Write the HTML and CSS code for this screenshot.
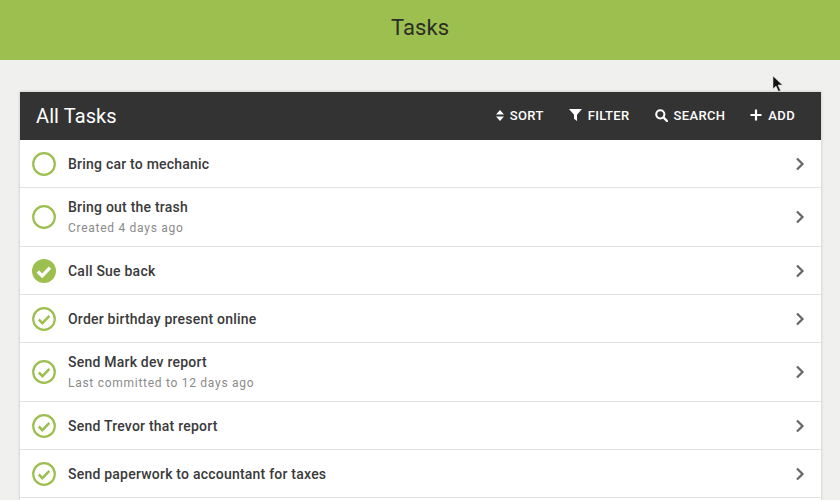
FILE: index.html
```html
<!DOCTYPE html>
<html lang="en">
<head>
  <meta charset="UTF-8" />
  <title>Tasks</title>
  <link rel="stylesheet" href="styles.css">
</head>
<body>
  <header class="app-bar"><h1>Tasks</h1></header>

  <svg class="cursor" width="12" height="18" viewBox="0 0 12 18"><path d="M1 1v13l3-3 2.500 5.500 2-1L6 10h4.500z" fill="#111" stroke="#ddd" stroke-width=".6"/></svg>

  <main class="panel">
    <div class="panel-head">
      <h2>All Tasks</h2>
      <div class="tools">
        <a class="tool">
          <svg width="8" height="11" viewBox="0 0 8 11"><path d="M4 0 8 4.500H0zM4 11 0 6.500h8z" fill="#fff"/></svg>
          SORT
        </a>
        <a class="tool">
          <svg width="13" height="12" viewBox="0 0 13 12"><path d="M0 0h13L8 5.800V12L5 9.800V5.800z" fill="#fff"/></svg>
          FILTER
        </a>
        <a class="tool">
          <svg width="13" height="13" viewBox="0 0 13 13"><circle cx="5.300" cy="5.300" r="4.100" fill="none" stroke="#fff" stroke-width="2"/><path d="M8.500 8.500l3.500 3.500" stroke="#fff" stroke-width="2.400" stroke-linecap="round"/></svg>
          SEARCH
        </a>
        <a class="tool">
          <svg width="12" height="12" viewBox="0 0 12 12"><path d="M6 .5v11M.5 6h11" stroke="#fff" stroke-width="2.200"/></svg>
          ADD
        </a>
      </div>
    </div>

    <ul class="task-list">
      <li class="task">
        <svg class="status" viewBox="0 0 24 24"><circle cx="12" cy="12" r="10.800" class="ring"/></svg>
        <div class="task-body"><div class="task-name">Bring car to mechanic</div></div>
        <svg class="chevron" viewBox="0 0 10 14"><path d="M2 1.500 7.500 7 2 12.500"/></svg>
      </li>
      <li class="task">
        <svg class="status" viewBox="0 0 24 24"><circle cx="12" cy="12" r="10.800" class="ring"/></svg>
        <div class="task-body">
          <div class="task-name">Bring out the trash</div>
          <div class="task-note">Created 4 days ago</div>
        </div>
        <svg class="chevron" viewBox="0 0 10 14"><path d="M2 1.500 7.500 7 2 12.500"/></svg>
      </li>
      <li class="task">
        <svg class="status" viewBox="0 0 24 24"><circle cx="12" cy="12" r="12" fill="#9dbf50"/><path d="M5.800 12.500l4.400 4.400 7.800-8.200" class="tick-white"/></svg>
        <div class="task-body"><div class="task-name">Call Sue back</div></div>
        <svg class="chevron" viewBox="0 0 10 14"><path d="M2 1.500 7.500 7 2 12.500"/></svg>
      </li>
      <li class="task">
        <svg class="status" viewBox="0 0 24 24"><circle cx="12" cy="12" r="10.800" class="ring"/><path d="M6.800 12.500l3.600 3.600 7-7.200" class="tick"/></svg>
        <div class="task-body"><div class="task-name">Order birthday present online</div></div>
        <svg class="chevron" viewBox="0 0 10 14"><path d="M2 1.500 7.500 7 2 12.500"/></svg>
      </li>
      <li class="task">
        <svg class="status" viewBox="0 0 24 24"><circle cx="12" cy="12" r="10.800" class="ring"/><path d="M6.800 12.500l3.600 3.600 7-7.200" class="tick"/></svg>
        <div class="task-body">
          <div class="task-name">Send Mark dev report</div>
          <div class="task-note">Last committed to 12 days ago</div>
        </div>
        <svg class="chevron" viewBox="0 0 10 14"><path d="M2 1.500 7.500 7 2 12.500"/></svg>
      </li>
      <li class="task">
        <svg class="status" viewBox="0 0 24 24"><circle cx="12" cy="12" r="10.800" class="ring"/><path d="M6.800 12.500l3.600 3.600 7-7.200" class="tick"/></svg>
        <div class="task-body"><div class="task-name">Send Trevor that report</div></div>
        <svg class="chevron" viewBox="0 0 10 14"><path d="M2 1.500 7.500 7 2 12.500"/></svg>
      </li>
      <li class="task">
        <svg class="status" viewBox="0 0 24 24"><circle cx="12" cy="12" r="10.800" class="ring"/><path d="M6.800 12.500l3.600 3.600 7-7.200" class="tick"/></svg>
        <div class="task-body"><div class="task-name">Send paperwork to accountant for taxes</div></div>
        <svg class="chevron" viewBox="0 0 10 14"><path d="M2 1.500 7.500 7 2 12.500"/></svg>
      </li>
    </ul>
  </main>
</body>
</html>
```

FILE: styles.css
```css
body {
  margin: 0;
  height: 500px;
  overflow: hidden;
  display: flex;
  flex-direction: column;
  background-color: #f0f0ee;
  font-family: Roboto, sans-serif;
  color: #333;
}
.app-bar {
  height: 54px;
  padding-bottom: 6px;
  background-color: #9dbf50;
  display: flex;
  justify-content: center;
  align-items: center;
}
.app-bar h1 {
  margin: 0;
  font-size: 22px;
  font-weight: 400;
  letter-spacing: 0.1px;
  color: #2b2e25;
}
.cursor {
  position: absolute;
  left: 772px;
  top: 75px;
}
.panel {
  flex: 1;
  margin: 32px 19px 0 20px;
  box-shadow: 0 0 3px rgba(0, 0, 0, 0.2);
  background-color: #fff;
}
.panel-head {
  height: 48px;
  background-color: #333;
  display: flex;
  align-items: center;
  justify-content: space-between;
  padding: 0 26px 0 16px;
}
.panel-head h2 {
  margin: 0;
  font-size: 20px;
  font-weight: 400;
  letter-spacing: 0.1px;
  color: #fff;
}
.tools {
  display: flex;
  gap: 25px;
  padding-bottom: 2px;
}
.tool {
  display: flex;
  align-items: center;
  gap: 6px;
  font-size: 13px;
  font-weight: 500;
  letter-spacing: 0.35px;
  color: #fff;
}
.task-list {
  list-style: none;
  margin: 0;
  padding: 0;
}
.task {
  display: flex;
  align-items: center;
  min-height: 47px;
  border-bottom: 1px solid #e2e2e2;
  padding: 0 16px 0 12px;
}
.task:has(.task-note) {
  min-height: 58px;
}
.status {
  width: 24px;
  height: 24px;
  flex: none;
  margin-right: 12px;
}
.ring {
  fill: none;
  stroke: #9dbf50;
  stroke-width: 2.200;
}
.tick {
  fill: none;
  stroke: #9dbf50;
  stroke-width: 2.500;
}
.tick-white {
  fill: none;
  stroke: #fff;
  stroke-width: 3.400;
}
.task-body {
  flex: 1;
}
.task-name {
  font-size: 14px;
  font-weight: 500;
  letter-spacing: 0.22px;
  color: #3a3a3a;
}
.task-note {
  margin-top: 6px;
  font-size: 12px;
  letter-spacing: 0.72px;
  color: #8a8a8a;
}
.chevron {
  width: 10px;
  height: 14px;
  fill: none;
  stroke: #666;
  stroke-width: 2.200;
}
```
